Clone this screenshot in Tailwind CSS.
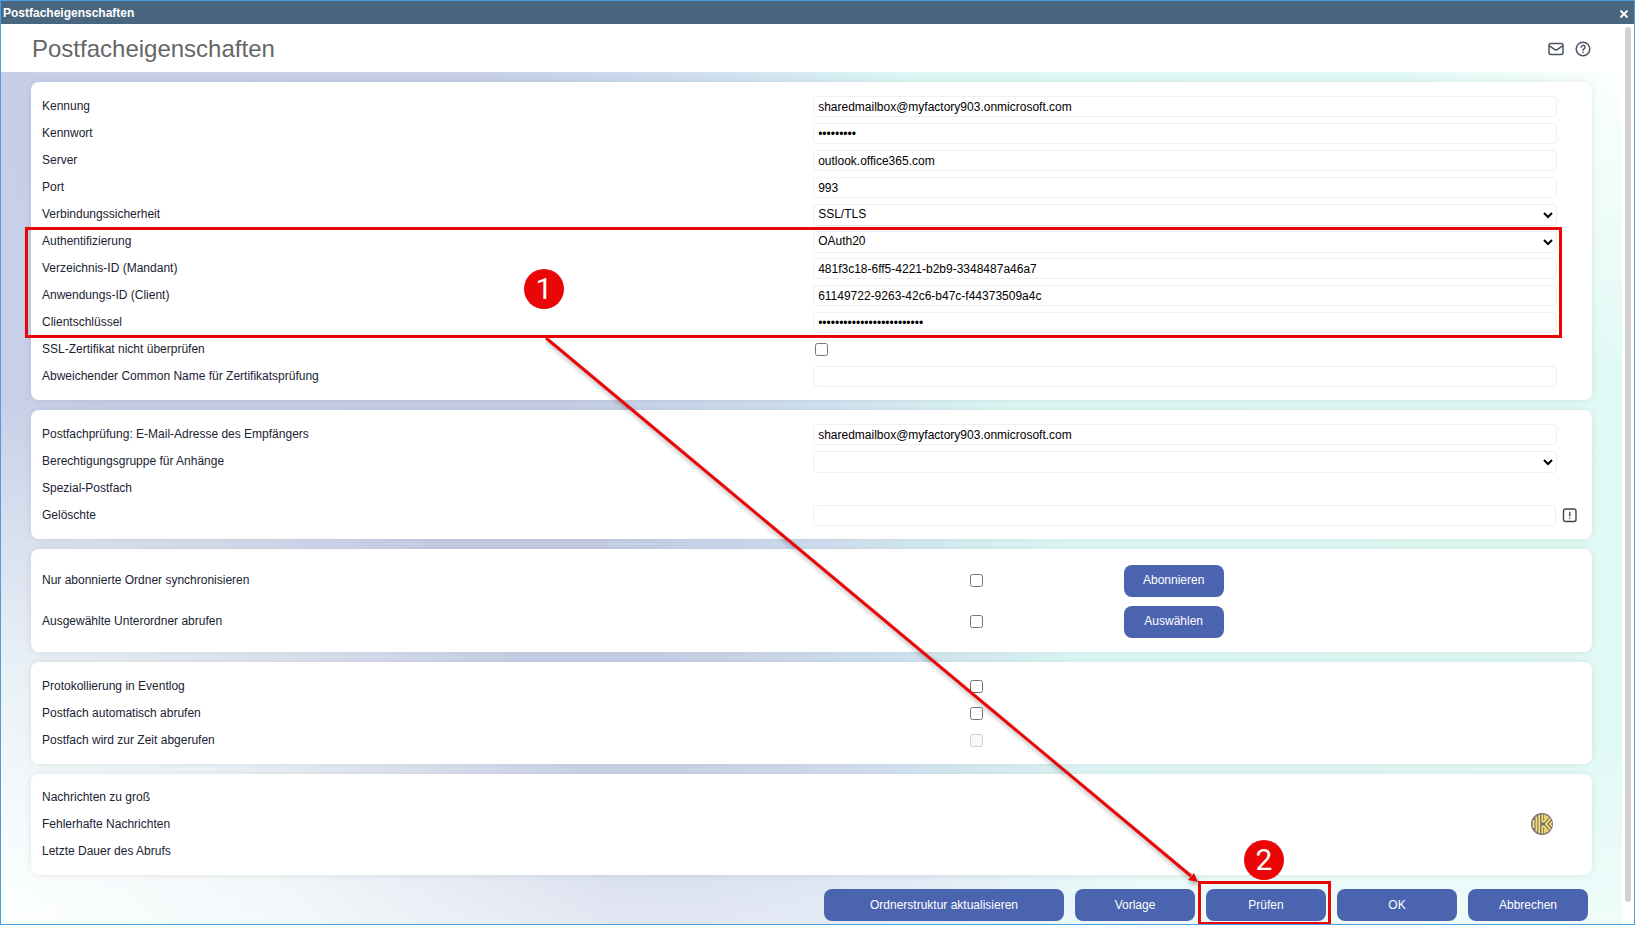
<!DOCTYPE html>
<html lang="de">
<head>
    <meta charset="UTF-8">
    <title>Postfacheigenschaften</title>
    <script src="https://cdn.jsdelivr.net/npm/@tailwindcss/browser@4"></script>
</head>
<body class="relative flex flex-col min-h-screen overflow-x-hidden bg-white border border-[#4a9fe0] font-['Liberation_Sans',Arial,sans-serif] text-xs text-[#1a2233]">

<!-- Titelleiste -->
<div class="flex items-center justify-between h-[23px] pl-0.5 pr-1.5 bg-[#4a6580] text-white">
    <span class="font-bold">Postfacheigenschaften</span>
    <button type="button" aria-label="Schließen" class="pt-0.5">
        <svg class="size-2" viewBox="0 0 8 8" stroke="currentColor" stroke-width="2"><path d="M.5.5l7 7M7.5.5l-7 7"/></svg>
    </button>
</div>

<!-- Kopfbereich -->
<header class="flex items-center justify-between h-12 pt-0.5 pl-[31px] pr-[42px]">
    <h1 class="text-2xl text-[#666]">Postfacheigenschaften</h1>
    <div class="flex items-center gap-[9px] text-[#4b5563]">
        <button type="button" aria-label="E-Mail">
            <svg class="size-[18px]" viewBox="0 0 18 18" fill="none" stroke="currentColor" stroke-width="1.5" stroke-linecap="round" stroke-linejoin="round">
                <rect x="2" y="3.5" width="14" height="11" rx="2"/>
                <path d="M2.5 5.8l4.9 3.5a2.7 2.7 0 0 0 3.2 0l4.9-3.5"/>
            </svg>
        </button>
        <button type="button" aria-label="Hilfe">
            <svg class="size-[18px]" viewBox="0 0 18 18" fill="none" stroke="currentColor" stroke-width="1.5" stroke-linecap="round" stroke-linejoin="round">
                <circle cx="9" cy="9" r="6.8"/>
                <path d="M7.2 7.2a1.9 1.9 0 1 1 2.7 1.8c-.6.3-.9.6-.9 1.2M9 12.3v.1"/>
            </svg>
        </button>
    </div>
</header>

<main class="flex flex-col grow mr-3 px-[30px] pt-2.5 pb-[3px] bg-[linear-gradient(0deg,#ffffff80_0%,#ffffff00_22%),radial-gradient(ellipse_38%_62%_at_0%_100%,#fafefe_0%,#f4fbfacc_45%,#f4fbfa00_100%),radial-gradient(ellipse_14%_35%_at_100%_0%,#fbfffe_0%,#fbfffe00_100%),linear-gradient(75deg,#c8cfe8_0%,#c6cfe6_38%,#cfdff0_50%,#dcf8f5_62%,#e2faf5_100%)]">
    <form class="flex flex-col gap-2.5">

        <!-- Zugangsdaten -->
        <section class="pl-[11px] pr-[35px] pt-[11px] pb-2.5 bg-white rounded-lg shadow-[0_0_10px_-2px_rgba(0,0,0,0.14)]">
            <div class="grid grid-cols-[50.9%_49.1%] items-center h-[27px]">
                <label for="kennung" class="pb-0.5">Kennung</label>
                <input id="kennung" type="text" value="sharedmailbox@myfactory903.onmicrosoft.com" class="w-full h-[21px] px-1 border border-[#efeff1] rounded text-black">
            </div>
            <div class="grid grid-cols-[50.9%_49.1%] items-center h-[27px]">
                <label for="kennwort" class="pb-0.5">Kennwort</label>
                <input id="kennwort" type="password" value="kennwort1" class="w-full h-[21px] px-1 border border-[#efeff1] rounded text-black">
            </div>
            <div class="grid grid-cols-[50.9%_49.1%] items-center h-[27px]">
                <label for="server" class="pb-0.5">Server</label>
                <input id="server" type="text" value="outlook.office365.com" class="w-full h-[21px] px-1 border border-[#efeff1] rounded text-black">
            </div>
            <div class="grid grid-cols-[50.9%_49.1%] items-center h-[27px]">
                <label for="port" class="pb-0.5">Port</label>
                <input id="port" type="text" value="993" class="w-full h-[21px] px-1 border border-[#efeff1] rounded text-black">
            </div>
            <div class="grid grid-cols-[50.9%_49.1%] items-center h-[27px]">
                <label for="sicherheit" class="pb-0.5">Verbindungssicherheit</label>
                <select id="sicherheit" class="w-full h-[22px] pb-0.5 border border-[#efeff1] rounded text-black">
                    <option>SSL/TLS</option>
                </select>
            </div>
            <div class="grid grid-cols-[50.9%_49.1%] items-center h-[27px]">
                <label for="auth" class="pb-0.5">Authentifizierung</label>
                <select id="auth" class="w-full h-[22px] pb-0.5 border border-[#efeff1] rounded text-black">
                    <option>OAuth20</option>
                </select>
            </div>
            <div class="grid grid-cols-[50.9%_49.1%] items-center h-[27px]">
                <label for="mandant" class="pb-0.5">Verzeichnis-ID (Mandant)</label>
                <input id="mandant" type="text" value="481f3c18-6ff5-4221-b2b9-3348487a46a7" class="w-full h-[21px] px-1 border border-[#efeff1] rounded text-black">
            </div>
            <div class="grid grid-cols-[50.9%_49.1%] items-center h-[27px]">
                <label for="client" class="pb-0.5">Anwendungs-ID (Client)</label>
                <input id="client" type="text" value="61149722-9263-42c6-b47c-f44373509a4c" class="w-full h-[21px] px-1 border border-[#efeff1] rounded text-black">
            </div>
            <div class="grid grid-cols-[50.9%_49.1%] items-center h-[27px]">
                <label for="schluessel" class="pb-0.5">Clientschlüssel</label>
                <input id="schluessel" type="password" value="clientschluessel123456789" class="w-full h-[21px] px-1 border border-[#efeff1] rounded text-black">
            </div>
            <div class="grid grid-cols-[50.9%_49.1%] items-center h-[27px]">
                <label for="zertifikat" class="pb-0.5">SSL-Zertifikat nicht überprüfen</label>
                <input id="zertifikat" type="checkbox" class="size-[13px] ml-0.5">
            </div>
            <div class="grid grid-cols-[50.9%_49.1%] items-center h-[27px]">
                <label for="commonname" class="pb-0.5">Abweichender Common Name für Zertifikatsprüfung</label>
                <input id="commonname" type="text" class="w-full h-[21px] px-1 border border-[#efeff1] rounded text-black">
            </div>
        </section>

        <!-- Postfach -->
        <section class="pl-[11px] pr-[35px] pt-[11px] pb-2.5 bg-white rounded-lg shadow-[0_0_10px_-2px_rgba(0,0,0,0.14)]">
            <div class="grid grid-cols-[50.9%_49.1%] items-center h-[27px]">
                <label for="empfaenger" class="pb-0.5">Postfachprüfung: E-Mail-Adresse des Empfängers</label>
                <input id="empfaenger" type="text" value="sharedmailbox@myfactory903.onmicrosoft.com" class="w-full h-[21px] px-1 border border-[#efeff1] rounded text-black">
            </div>
            <div class="grid grid-cols-[50.9%_49.1%] items-center h-[27px]">
                <label for="gruppe" class="pb-0.5">Berechtigungsgruppe für Anhänge</label>
                <select id="gruppe" class="w-full h-[22px] pb-0.5 border border-[#efeff1] rounded text-black">
                    <option></option>
                </select>
            </div>
            <div class="flex items-center h-[27px] pb-0.5">Spezial-Postfach</div>
            <div class="grid grid-cols-[50.9%_49.1%] items-center h-[27px]">
                <label for="geloeschte" class="pb-0.5">Gelöschte</label>
                <div class="flex items-center gap-1.5 -mr-[21px]">
                    <input id="geloeschte" type="text" class="grow h-[21px] px-1 border border-[#efeff1] rounded text-black">
                    <button type="button" aria-label="Ordner wählen">
                        <svg class="size-4" viewBox="0 0 16 16" fill="none" stroke="#444" stroke-width="1.4" stroke-linecap="round">
                            <rect x="1.5" y="1" width="12.5" height="12.5" rx="2"/>
                            <path d="M7.8 4.4v3.4M7.8 10.1v.1"/>
                        </svg>
                    </button>
                </div>
            </div>
        </section>

        <!-- Ordner -->
        <section class="pl-[11px] pr-[35px] pt-[11px] pb-2.5 bg-white rounded-lg shadow-[0_0_10px_-2px_rgba(0,0,0,0.14)]">
            <div class="grid grid-cols-[61.1%_10.3%_1fr] items-center h-[41px]">
                <label for="abonniert" class="pb-0.5">Nur abonnierte Ordner synchronisieren</label>
                <input id="abonniert" type="checkbox" class="size-[13px] ml-0.5">
                <button type="button" class="w-[100px] h-8 pb-0.5 rounded-lg bg-[#4b64b0] text-white">Abonnieren</button>
            </div>
            <div class="grid grid-cols-[61.1%_10.3%_1fr] items-center h-[41px]">
                <label for="unterordner" class="pb-0.5">Ausgewählte Unterordner abrufen</label>
                <input id="unterordner" type="checkbox" class="size-[13px] ml-0.5">
                <button type="button" class="w-[100px] h-8 pb-0.5 rounded-lg bg-[#4b64b0] text-white">Auswählen</button>
            </div>
        </section>

        <!-- Abruf -->
        <section class="pl-[11px] pr-[35px] pt-[11px] pb-2.5 bg-white rounded-lg shadow-[0_0_10px_-2px_rgba(0,0,0,0.14)]">
            <div class="grid grid-cols-[61.1%_38.9%] items-center h-[27px]">
                <label for="eventlog" class="pb-0.5">Protokollierung in Eventlog</label>
                <input id="eventlog" type="checkbox" class="size-[13px] ml-0.5">
            </div>
            <div class="grid grid-cols-[61.1%_38.9%] items-center h-[27px]">
                <label for="automatisch" class="pb-0.5">Postfach automatisch abrufen</label>
                <input id="automatisch" type="checkbox" class="size-[13px] ml-0.5">
            </div>
            <div class="grid grid-cols-[61.1%_38.9%] items-center h-[27px]">
                <label for="abgerufen" class="pb-0.5">Postfach wird zur Zeit abgerufen</label>
                <input id="abgerufen" type="checkbox" disabled class="size-[13px] ml-0.5">
            </div>
        </section>

        <!-- Status -->
        <section class="pl-[11px] pr-[39px] py-2.5 bg-white rounded-lg shadow-[0_0_10px_-2px_rgba(0,0,0,0.14)]">
            <div class="flex items-center h-[27px] pb-0.5">Nachrichten zu groß</div>
            <div class="flex items-center justify-between h-[27px] pb-0.5">
                Fehlerhafte Nachrichten
                <svg class="size-[22px]" viewBox="0 0 22 22">
                    <circle cx="11" cy="11" r="11" fill="#777672"/>
                    <g fill="none" stroke="#fadf6e" stroke-width="1.7">
                        <path d="M2.6 7v8M5.4 3.4v15.2M8.2 2v18"/>
                        <path d="M11.3 1.5v7.2h1.6l4.6-5M11.3 20.5v-7.2h1.6l4.6 5"/>
                        <path d="M14 1.8v3l1.6-1.8M14 20.2v-3l1.6 1.8"/>
                        <path d="M19.4 5.6L15 11l4.4 5.4"/>
                        <path d="M21 8.8L19 11l2 2.2"/>
                    </g>
                </svg>
            </div>
            <div class="flex items-center h-[27px] pb-0.5">Letzte Dauer des Abrufs</div>
        </section>

        <!-- Schaltflächen -->
        <div class="flex justify-end gap-[11px] mt-1 pr-1">
            <button type="button" class="w-60 h-8 rounded-lg bg-[#4b64b0] text-white">Ordnerstruktur aktualisieren</button>
            <button type="button" class="w-30 h-8 rounded-lg bg-[#4b64b0] text-white">Vorlage</button>
            <button type="button" class="w-30 h-8 rounded-lg bg-[#4b64b0] text-white">Prüfen</button>
            <button type="submit" class="w-30 h-8 rounded-lg bg-[#4b64b0] text-white">OK</button>
            <button type="button" class="w-30 h-8 rounded-lg bg-[#4b64b0] text-white">Abbrechen</button>
        </div>
    </form>
</main>

<!-- Bildlaufleiste -->
<div class="absolute right-[3px] top-[26px] bottom-[22px] w-1.5 rounded-full bg-[#d2d2d4]"></div>

<!-- Markierungen -->
<div class="absolute left-6 top-[226px] w-[1537px] h-[111px] border-3 border-[#ea0606]"></div>
<div class="absolute left-[1197px] top-[880px] w-[133px] h-[44px] border-3 border-[#ea0606]"></div>
<svg class="absolute left-0 top-0 w-[1220px] h-[900px] pointer-events-none drop-shadow-[1px_3px_2px_rgba(0,0,0,0.3)]" viewBox="0 0 1220 900">
    <path d="M545 337L1190 875" stroke="#ea0606" stroke-width="3"/>
    <path d="M1197 881l-10-2 6-7z" fill="#ea0606"/>
</svg>
<div class="absolute left-[523px] top-[268px] flex items-center justify-center size-10 rounded-full bg-[#ea0606] font-[Roboto,sans-serif] text-3xl text-white">1</div>
<div class="absolute left-[1243px] top-[839px] flex items-center justify-center size-10 rounded-full bg-[#ea0606] font-[Roboto,sans-serif] text-3xl text-white">2</div>

</body>
</html>
